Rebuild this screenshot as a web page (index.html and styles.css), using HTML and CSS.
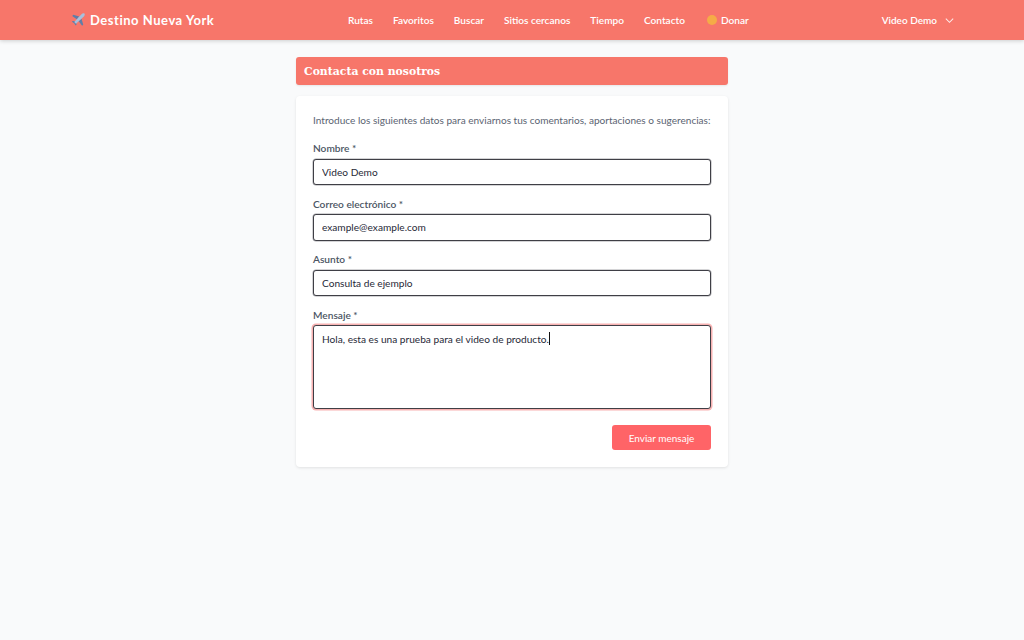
FILE: index.html
```html
<!DOCTYPE html>
<html lang="es">
<head>
<meta charset="utf-8">
<title>Destino Nueva York</title>
<link rel="stylesheet" href="styles.css">
</head>
<body>
<header class="navbar">
  <a class="brand" href="#">
    <svg class="plane" viewBox="0 0 24 24" width="14" height="14"><path fill="#5f7ea8" d="M14 6L4 3 2 5l8.500 6zM18 10l3 10-2 2-6-8.500zM7 14l-4-.5-1.500 1.500 4 2.500 2.500 4 1.500-1.500L9 17z"/><path fill="#a8c0dc" d="M23 1c-1.200-1.200-3.500-.5-5 1L5.500 15.500 8.500 18.500 22 6c1.500-1.500 2.200-3.800 1-5z"/></svg>
    <span>Destino Nueva York</span>
  </a>
  <nav class="nav-links">
    <a href="#">Rutas</a>
    <a href="#">Favoritos</a>
    <a href="#">Buscar</a>
    <a href="#">Sitios cercanos</a>
    <a href="#">Tiempo</a>
    <a href="#">Contacto</a>
    <a href="#" class="donate"><span class="coin"></span>Donar</a>
  </nav>
  <a class="user" href="#">
    <span>Video Demo</span>
    <svg viewBox="0 0 12 12" width="11" height="11"><path d="M2 4l4 4 4-4" fill="none" stroke="#fff" stroke-opacity=".85" stroke-width="1.100"/></svg>
  </a>
</header>
<main class="page">
  <h1 class="title">Contacta con nosotros</h1>
  <form class="card">
    <p class="intro">Introduce los siguientes datos para enviarnos tus comentarios, aportaciones o sugerencias:</p>
    <div class="field">
      <label for="n">Nombre *</label>
      <input id="n" type="text" value="Video Demo">
    </div>
    <div class="field">
      <label for="e">Correo electrónico *</label>
      <input id="e" type="text" value="example@example.com">
    </div>
    <div class="field">
      <label for="a">Asunto *</label>
      <input id="a" type="text" value="Consulta de ejemplo">
    </div>
    <div class="field">
      <label>Mensaje *</label>
      <div class="message">Hola, esta es una prueba para el video de producto.<span class="caret"></span></div>
    </div>
    <div class="actions"><button type="button">Enviar mensaje</button></div>
  </form>
</main>
</body>
</html>
```
FILE: styles.css
```css
* { box-sizing: border-box; }
html, body { margin: 0; height: 100%; }
body {
  background: #f9fafb;
  font-family: "Lato", "Noto Sans", sans-serif;
  color: #1f2937;
}
a { color: inherit; text-decoration: none; }
.navbar {
  height: 40px;
  background: #f7766a;
  box-shadow: 0 1px 4px rgba(0,0,0,.18);
  display: flex;
  align-items: center;
  padding: 0 69px 0 71px;
  color: #fff;
  position: relative;
}
.brand {
  display: flex;
  align-items: center;
  gap: 5px;
  font-family: "Lato", sans-serif;
  font-weight: 700;
  font-size: 13px;
  letter-spacing: .53px;
  width: 277px;
}
.nav-links {
  display: flex;
  gap: 20px;
  font-size: 10.080px;
  font-weight: 600;
  color: #fff;
}
.donate { display: flex; align-items: center; gap: 4px; margin-left: 2px; }
.coin { width: 10px; height: 10px; border-radius: 50%; background: #f5ab47; }
.user {
  margin-left: auto;
  display: flex;
  align-items: center;
  gap: 7px;
  font-size: 10px;
  font-weight: 600;
}
.page {
  width: 432px;
  margin: 17px auto 0;
}
.title {
  margin: 0 0 11px;
  height: 28px;
  line-height: 29px;
  padding: 0 8px;
  background: #f7766a;
  border-radius: 3px;
  color: #fff;
  font-family: "DejaVu Serif", serif;
  font-size: 10.850px;
  font-weight: 700;
  box-shadow: 0 1px 2px rgba(0,0,0,.08);
}
.card {
  background: #fff;
  border-radius: 4px;
  box-shadow: 0 1px 3px rgba(0,0,0,.1);
  padding: 17px;
  height: 371px;
}
.intro {
  margin: 0 0 13px;
  font-size: 10.070px;
  line-height: 15px;
  color: #5b6472;
  white-space: nowrap;
}
.field { margin-bottom: 11.500px; }
.field label {
  display: block;
  font-size: 10.150px;
  font-weight: 600;
  line-height: 15px;
  margin-bottom: 2.500px;
  color: #4b5563;
}
.field input, .message {
  display: block;
  width: 100%;
  border: 1px solid #3f3f46;
  border-radius: 3px;
  font-family: inherit;
  font-size: 10.150px;
  color: #1f2937;
  background: #fff;
  padding: 0 8px;
  outline: none;
}
.field input { height: 26.500px; box-shadow: 0 0 0 .5px rgba(63,63,70,.45); }
.message {
  height: 84px;
  padding-top: 6px;
  line-height: 15px;
  box-shadow: 0 0 0 1.500px rgba(239,100,100,.5);
}
.caret {
  display: inline-block;
  width: 1px;
  height: 13px;
  background: #111;
  vertical-align: -2px;
}
.actions { display: flex; justify-content: flex-end; margin-top: 16px; }
button {
  width: 99px;
  height: 25px;
  border: 0;
  border-radius: 3px;
  background: #ff6467;
  color: #fff;
  font-family: inherit;
  font-size: 10px;
  padding: 0;
}
```
